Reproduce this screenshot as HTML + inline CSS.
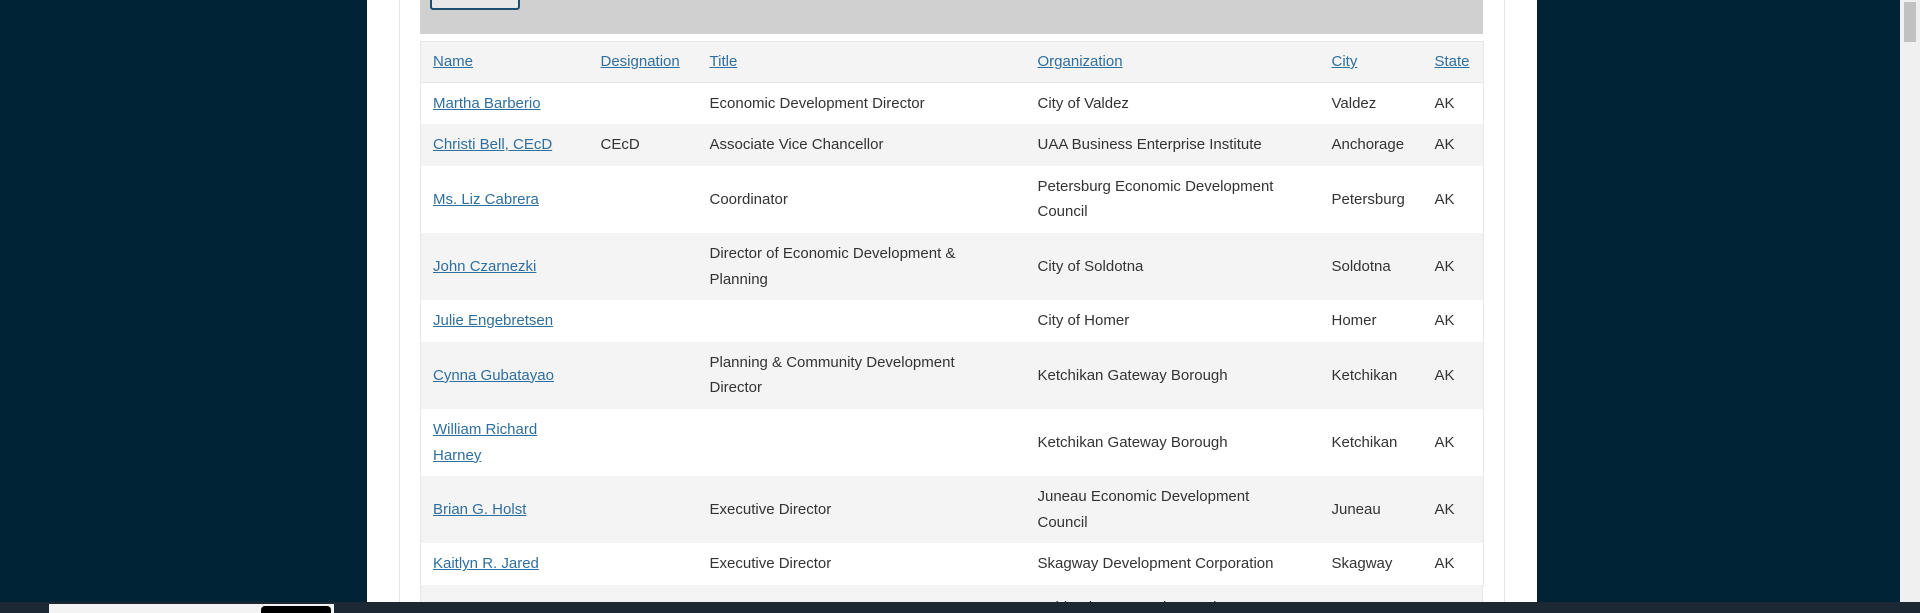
<!DOCTYPE html>
<html><head><meta charset="utf-8"><style>
*{margin:0;padding:0;box-sizing:border-box}
html,body{width:1920px;height:613px;overflow:hidden}
body{background:#012336;font-family:"Liberation Sans",sans-serif;position:relative}
.clip{position:absolute;left:0;top:0;width:1920px;height:613px;overflow:hidden}
.panel{position:absolute;left:367px;top:0;width:1170px;height:613px;background:#fff}
.inner{position:absolute;left:399px;top:0;width:1106px;height:613px;border-left:1px solid #e3e3e3;border-right:1px solid #e3e3e3}
.gray{position:absolute;left:420px;top:0;width:1063px;height:34px;background:#d0d0d0}
.btn{position:absolute;left:430px;top:-4px;width:90px;height:14px;border:2px solid #1d4f6e;border-radius:3px;background:#e8e8e8}
table{position:absolute;left:420px;top:41px;width:1063px;border-collapse:collapse;font-size:15px;color:#333;table-layout:fixed;border:1px solid #e6e6e6}
td,th{padding:8px 0 8px 12px;line-height:25.6px;text-align:left;font-weight:normal;vertical-align:middle}
th{background:#f4f4f4;border-bottom:1px solid #e6e6e6;padding:7px 0 7px 12px}
tr.s td{background:#f4f4f4}
a{color:#2f6f9f;text-decoration:underline}
.last{position:absolute;left:420px;top:585px;width:1063px;height:17px;background:#f4f4f4;border-left:1px solid #e6e6e6;border-right:1px solid #e6e6e6;overflow:hidden;font-size:15px;color:#333}
.last span{position:absolute;left:617px;top:10px;line-height:25.6px;white-space:nowrap}
.sb{position:absolute;left:1900px;top:0;width:20px;height:602px;background:#f0f0f0}
.sb i{position:absolute;left:4px;top:2px;width:12px;height:40px;background:#c1c1c1}
.tb{position:absolute;left:0;top:602px;width:1920px;height:11px;background:#1c2833;z-index:5}
.sr{position:absolute;left:49px;top:604px;width:285px;height:9px;background:#f3f3f3;z-index:6}
.bk{position:absolute;left:261px;top:606px;width:70px;height:7px;background:#000;border-radius:4px 4px 0 0;z-index:7}
</style></head><body>
<div class="clip">
<div class="panel"></div><div class="inner"></div>
<div class="gray"></div><div class="btn"></div>
<table>
<colgroup><col style="width:168px"><col style="width:109px"><col style="width:328px"><col style="width:294px"><col style="width:103px"><col style="width:61px"></colgroup>
<tr><th><a>Name</a></th><th><a>Designation</a></th><th><a>Title</a></th><th><a>Organization</a></th><th><a>City</a></th><th><a>State</a></th></tr>
<tr><td><a>Martha Barberio</a></td><td></td><td>Economic Development Director</td><td>City of Valdez</td><td>Valdez</td><td>AK</td></tr>
<tr class="s"><td><a>Christi Bell, CEcD</a></td><td>CEcD</td><td>Associate Vice Chancellor</td><td>UAA Business Enterprise Institute</td><td>Anchorage</td><td>AK</td></tr>
<tr><td><a>Ms. Liz Cabrera</a></td><td></td><td>Coordinator</td><td>Petersburg Economic Development<br>Council</td><td>Petersburg</td><td>AK</td></tr>
<tr class="s"><td><a>John Czarnezki</a></td><td></td><td>Director of Economic Development &amp;<br>Planning</td><td>City of Soldotna</td><td>Soldotna</td><td>AK</td></tr>
<tr><td><a>Julie Engebretsen</a></td><td></td><td></td><td>City of Homer</td><td>Homer</td><td>AK</td></tr>
<tr class="s"><td><a>Cynna Gubatayao</a></td><td></td><td>Planning &amp; Community Development<br>Director</td><td>Ketchikan Gateway Borough</td><td>Ketchikan</td><td>AK</td></tr>
<tr><td><a>William Richard<br>Harney</a></td><td></td><td></td><td>Ketchikan Gateway Borough</td><td>Ketchikan</td><td>AK</td></tr>
<tr class="s"><td><a>Brian G. Holst</a></td><td></td><td>Executive Director</td><td>Juneau Economic Development<br>Council</td><td>Juneau</td><td>AK</td></tr>
<tr><td><a>Kaitlyn R. Jared</a></td><td></td><td>Executive Director</td><td>Skagway Development Corporation</td><td>Skagway</td><td>AK</td></tr>
</table>
<div class="last"><span>Fairbanks Economic Development</span></div>
<div class="sb"><i></i></div>
<div class="tb"></div><div class="sr"></div><div class="bk"></div>
</div>
</body></html>
